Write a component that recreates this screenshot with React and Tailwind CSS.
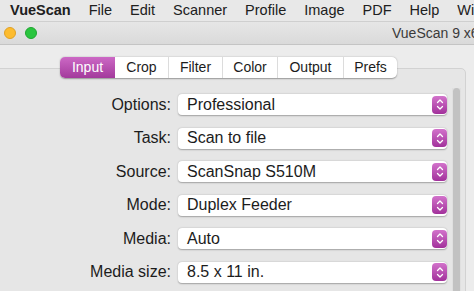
import React from 'react'

const menus = ['File', 'Edit', 'Scanner', 'Profile', 'Image', 'PDF', 'Help', 'Window']

const tabs = [
  { name: 'Input', w: 'w-[55px]' },
  { name: 'Crop', w: 'w-[53px]' },
  { name: 'Filter', w: 'w-[54px]' },
  { name: 'Color', w: 'w-[55px]' },
  { name: 'Output', w: 'w-[66px]' },
  { name: 'Prefs', w: 'w-[54px]' },
]

const rows = [
  ['Options:', 'Professional'],
  ['Task:', 'Scan to file'],
  ['Source:', 'ScanSnap S510M'],
  ['Mode:', 'Duplex Feeder'],
  ['Media:', 'Auto'],
  ['Media size:', '8.5 x 11 in.'],
]

const Stepper = () => (
  <div className="ml-auto w-[15px] h-[18px] rounded-[4px] bg-gradient-to-b from-[#d272cb] to-[#a2309b] flex items-center justify-center">
    <svg width="8" height="13" viewBox="0 0 8 13" fill="none" stroke="white" strokeWidth="1.3" strokeLinecap="round" strokeLinejoin="round">
      <path d="M1.5 4.5 L4 2 L6.5 4.5" />
      <path d="M1.5 8.5 L4 11 L6.5 8.5" />
    </svg>
  </div>
)

const Select = ({ value }) => (
  <div className="w-[269px] h-[21px] flex items-center bg-white rounded-[4px] shadow-[0_0.5px_1.5px_rgba(0,0,0,0.3)]">
    <span className="pl-[9px] text-[16px] leading-none text-[#1c1c1c]">{value}</span>
    <Stepper />
  </div>
)

export default function App() {
  return (
    <div className="w-[474px] h-[291px] overflow-hidden bg-[#ececec] font-['Liberation_Sans',Arial,sans-serif]">
      {/* menu bar */}
      <div className="h-[22px] flex items-center gap-[18px] pl-[10px] bg-[#e8e8e8] border-b border-[#cfcfcf] text-[14.5px] text-[#202020] whitespace-nowrap overflow-hidden">
        <span className="font-bold">VueScan</span>
        {menus.map(m => <span key={m}>{m}</span>)}
      </div>

      {/* title bar */}
      <div className="h-[23px] flex items-center bg-gradient-to-b from-[#e6e6e6] to-[#dadada] border-b border-[#c4c4c4] whitespace-nowrap overflow-hidden">
        <div className="flex items-center gap-[9px] ml-[4px]">
          <div className="w-[12px] h-[12px] rounded-full bg-[#fdbc2f] border border-[#e0a125]" />
          <div className="w-[12px] h-[12px] rounded-full bg-[#2ac53f] border border-[#1fa630]" />
        </div>
        <span className="ml-[355px] text-[14px] text-[#3a3a3a]">VueScan 9 x64</span>
      </div>

      {/* tabs */}
      <div className="relative z-10 mt-[12px] ml-[60px] flex h-[21px] w-fit bg-white rounded-[5px] shadow-[0_0.5px_1.5px_rgba(0,0,0,0.35)] text-[14px] overflow-hidden">
        {tabs.map((t, i) => (
          <div
            key={t.name}
            className={`${t.w} flex items-center justify-center ${i === 0 ? 'bg-gradient-to-b from-[#cc68c5] to-[#a33a9c] text-white' : 'text-[#1c1c1c]'} ${i > 1 ? 'border-l border-[#dcdcdc]' : ''}`}
          >
            {t.name}
          </div>
        ))}
      </div>

      {/* group box */}
      <div className="-mt-[10px] -ml-[6px] w-[472px] h-[240px] flex bg-[#e6e6e6] border border-[#d2d2d2] rounded-[5px]">
        <div className="pt-[25px] flex flex-col gap-[12.6px]">
          {rows.map(([label, value]) => (
            <div key={label} className="h-[21px] flex items-center">
              <span className="w-[176px] text-right text-[16px] leading-none text-[#1c1c1c]">{label}</span>
              <div className="ml-[7px]">
                <Select value={value} />
              </div>
            </div>
          ))}
        </div>
        <div className="ml-[5px] mt-[19px] w-[9px] bg-[#e0e0e0] flex justify-center">
          <div className="w-[7px] h-[260px] rounded-full bg-[#c2c2c2]" />
        </div>
      </div>
    </div>
  )
}
